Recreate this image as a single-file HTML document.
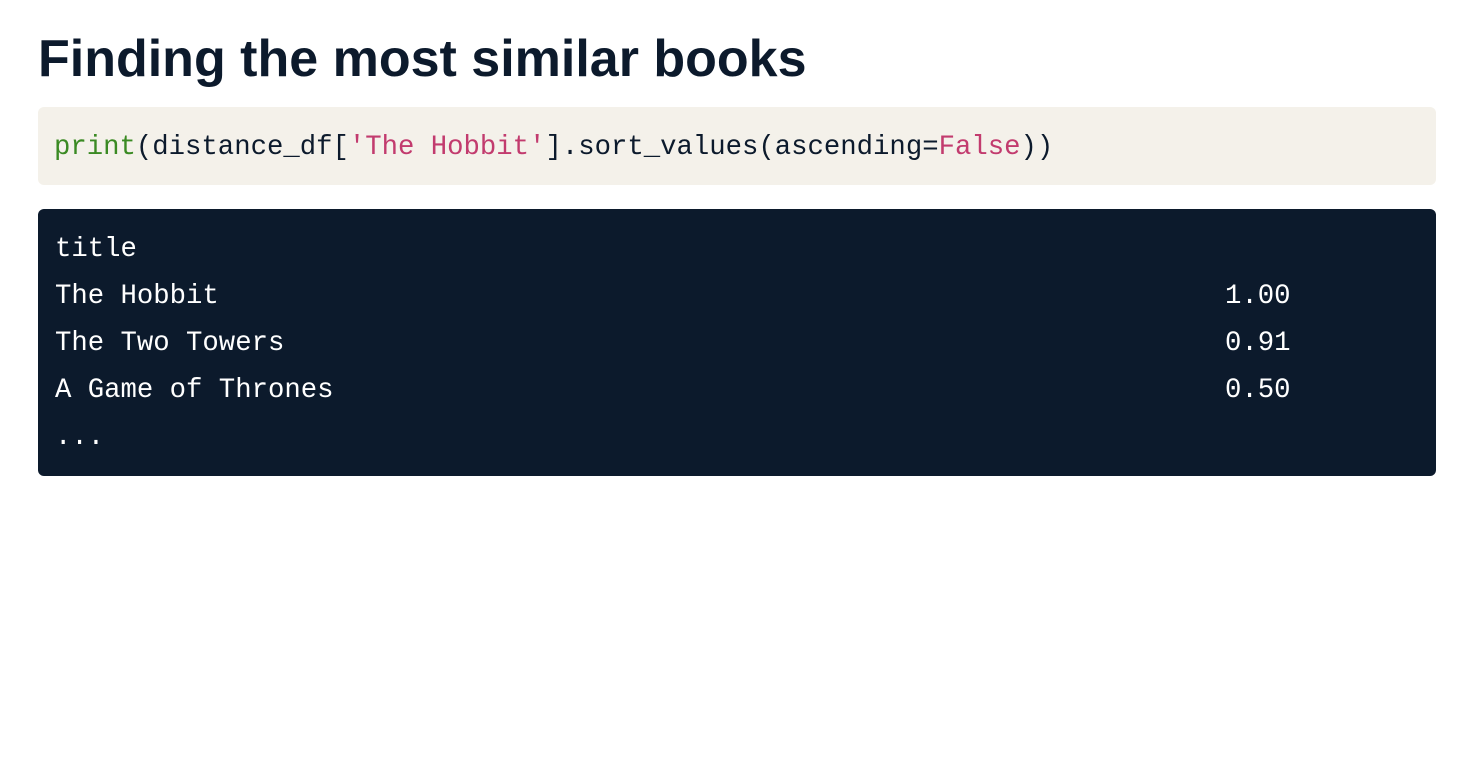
<!DOCTYPE html>
<html><head><meta charset="utf-8"><style>
body{margin:0;background:#fff;width:1480px;height:760px;overflow:hidden;}
h1{position:absolute;left:38px;top:27px;margin:0;font:bold 52px/64px "Liberation Sans",sans-serif;color:#0c1a2c;letter-spacing:0px;}
.code{position:absolute;left:38px;top:107px;width:1398px;height:78px;background:#f4f1ea;border-radius:6px;}
.mono{font-family:"Liberation Mono",monospace;font-size:27.3px;}
.code pre{margin:0;position:absolute;left:16px;top:24px;color:#0c1a2c;line-height:34px;}
.g{color:#3a8a23}.p{color:#c23b6e}
.out{position:absolute;left:38px;top:209px;width:1398px;height:267px;background:#0c1a2c;border-radius:6px;color:#fff;}
.out div{position:absolute;left:17px;line-height:34px;white-space:pre;}
.out span{position:absolute;left:1170px;}
</style></head><body>
<h1>Finding the most similar books</h1>
<div class="code"><pre class="mono"><span class="g">print</span>(distance_df[<span class="p">'The Hobbit'</span>].sort_values(ascending=<span class="p">False</span>))</pre></div>
<div class="out mono">
<div style="top:24px">title</div>
<div style="top:71px">The Hobbit<span>1.00</span></div>
<div style="top:118px">The Two Towers<span>0.91</span></div>
<div style="top:165px">A Game of Thrones<span>0.50</span></div>
<div style="top:212px">...</div>
</div>
</body></html>
